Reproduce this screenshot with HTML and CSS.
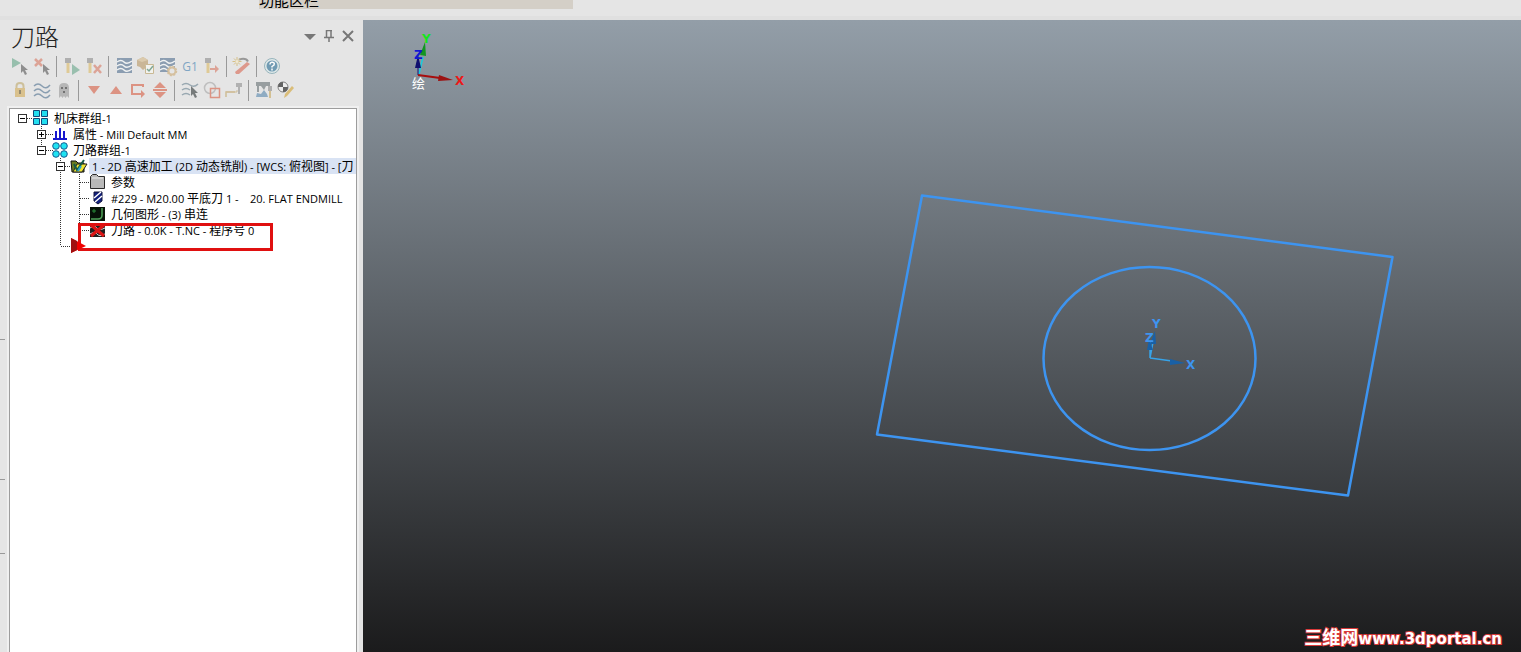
FILE: index.html
```html
<!DOCTYPE html>
<html lang="zh-CN">
<head>
<meta charset="utf-8">
<title>刀路</title>
<link rel="stylesheet" href="styles.css">
</head>
<body>
<header class="top-strip"><div class="tab-strip">功能区栏</div></header>
<div class="workspace">
  <div class="rail"><i class="tick tick-a"></i><i class="tick tick-b"></i><i class="tick tick-c"></i></div>
  <aside class="panel">
    <div class="panel-head">
      <h1>刀路</h1>
      <div class="panel-tools">
        <button aria-label="菜单"><svg width="12" height="12"><path d="M0 4h12L6 10z" fill="#777"/></svg></button>
        <button aria-label="固定"><svg width="12" height="12"><path d="M3.500 0v7M8 0v7M3 .5h6M1 7.500h10M6 8v4" fill="none" stroke="#777" stroke-width="1.500"/></svg></button>
        <button aria-label="关闭"><svg width="12" height="12"><path d="M1 1l10 10M11 1L1 11" stroke="#777" stroke-width="2"/></svg></button>
      </div>
    </div>
    <div class="toolbar">
      <button aria-label="选择全部操作"><svg viewBox="0 0 22 24"><path d="M3 4v10l9-5z" fill="#8fbba8"/><path d="M12 10v9l2-2 2 4 2-1-2-4h3z" fill="#858585"/></svg></button>
      <button aria-label="选择全部失效操作"><svg viewBox="0 0 22 24"><path d="M4 5l7 7M11 5l-7 7" stroke="#dc9c8e" stroke-width="2.500"/><path d="M12 10v9l2-2 2 4 2-1-2-4h3z" fill="#858585"/></svg></button>
      <span class="sep"></span>
      <button aria-label="重新生成"><svg viewBox="0 0 22 24"><path d="M4 4h6v5H4z" fill="#aaa"/><path d="M5.500 9h3v10h-3z" fill="#dfc88e"/><path d="M11 10v11l8-5z" fill="#91bba9"/></svg></button>
      <button aria-label="重新生成失效"><svg viewBox="0 0 22 24"><path d="M4 4h6v5H4z" fill="#aaa"/><path d="M5.500 9h3v10h-3z" fill="#dfc88e"/><path d="M11 11l7 8M18 11l-7 8" stroke="#dc9c8e" stroke-width="2.500"/></svg></button>
      <span class="sep"></span>
      <button aria-label="模拟"><svg viewBox="0 0 22 24"><path d="M4 4h15v15H4z" fill="#8296ac"/><path d="M4 8q4-3 7 0t8-1M4 12q4-3 7 0t8-1M4 16q4-3 7 0t8-1" fill="none" stroke="#f3f5f5" stroke-width="1.500"/></svg></button>
      <button aria-label="验证"><svg viewBox="0 0 22 24"><path d="M2 6l6-3 5 3v6l-5 4-3-3-3-1z" fill="#c8b28f"/><path d="M2 6l5 2 6-2-5-3z" fill="#dac8a8"/><path d="M10.500 11.500v8h8v-9h-8z" fill="#f4f4ef" stroke="#c6b58d"/><path d="M12 15l2 2 4-5" fill="none" stroke="#75a18d" stroke-width="1.500"/></svg></button>
      <button aria-label="模拟选项"><svg viewBox="0 0 22 24"><path d="M3 4h15v14H3z" fill="#8296ac"/><path d="M3 8q4-3 7 0t8-1M3 12q4-3 7 0t8-1M3 16q4-3 7 0" fill="none" stroke="#f3f5f5" stroke-width="1.500"/><circle cx="15" cy="17" r="3.500" fill="#e5e5e5" stroke="#d4bd98" stroke-width="2"/><circle cx="15" cy="17" r="4.500" fill="none" stroke="#d4bd98" stroke-width="1.500" stroke-dasharray="2 1.500"/></svg></button>
      <button class="g1">G1</button>
      <button aria-label="高速进给"><svg viewBox="0 0 22 24"><path d="M4 4h6v5H4z" fill="#aaa"/><path d="M5.500 9h3v10h-3z" fill="#dfc88e"/><path d="M9 15h7" stroke="#dc9c8e" stroke-width="2"/><path d="M14 11l4 4-4 4z" fill="#dc9c8e"/></svg></button>
      <span class="sep"></span>
      <button aria-label="高速铣削"><svg viewBox="0 0 22 24"><path d="M4 18L16 8l3 2L8 20H5z" fill="#dd9082"/><path d="M8 5.500q7-2 9 2" fill="none" stroke="#909090" stroke-width="2"/><path d="M6 3v9M1.500 7.500h9M3 4.500l6 6M9 4.500l-6 6" stroke="#d5bd7e"/><circle cx="6" cy="7.500" r="1.500" fill="#f3ead0"/></svg></button>
      <span class="sep"></span>
      <button aria-label="帮助"><svg viewBox="0 0 22 24"><circle cx="11" cy="12" r="7.500" fill="#dfe9ea" stroke="#8fb0b8"/><circle cx="11" cy="12" r="5.500" fill="#6594ae"/><path d="M9 10.500q0-2.500 2.500-2.200 2.500.5 1.500 2.700l-2 1.500v1M11 14.500v2" fill="none" stroke="#fff" stroke-width="1.500"/></svg></button>
    </div>
    <div class="toolbar">
      <button aria-label="锁定"><svg viewBox="0 0 22 24"><path d="M7.500 11V8q0-3 3.500-3t3.500 3v3" fill="none" stroke="#cbbd93" stroke-width="2"/><path d="M6 10h10v9H6z" fill="#d8be84"/><path d="M11 12v4" stroke="#8d8265" stroke-width="2"/></svg></button>
      <button aria-label="刀路显示"><svg viewBox="0 0 22 24"><path d="M3 8q4-4 8 0t8-1M3 13q4-4 8 0t8-1M3 18q4-4 8 0t8-1" fill="none" stroke="#8097ac" stroke-width="1.500"/></svg></button>
      <button aria-label="隐藏"><svg viewBox="0 0 22 24"><path d="M6 20V10q0-5 5-5t5 5v10l-2-2-1.500 2-1.500-2-1.500 2L8 18z" fill="#b1b1b1"/><path d="M8 9h2v2H8zM12 9h2v2h-2zM10 13h2v2h-2z" fill="#666"/></svg></button>
      <span class="sep"></span>
      <button aria-label="下移"><svg viewBox="0 0 22 24"><path d="M5 8h12l-6 8z" fill="#dc8b79"/></svg></button>
      <button aria-label="上移"><svg viewBox="0 0 22 24"><path d="M5 16h12l-6-8z" fill="#dc8b79"/></svg></button>
      <button aria-label="移动插入箭头"><svg viewBox="0 0 22 24"><path d="M16 9V7H5v9h10" fill="none" stroke="#dc8b79" stroke-width="2"/><path d="M14 12l4 4-4 4z" fill="#dc8b79"/></svg></button>
      <button aria-label="滚动"><svg viewBox="0 0 22 24"><path d="M5 10h12l-6-6zM5 14h12l-6 6zM4 11h14v2H4z" fill="#dc8b79"/></svg></button>
      <span class="sep"></span>
      <button aria-label="选择显示"><svg viewBox="0 0 22 24"><path d="M3 7q4-3 8 0t8-1M3 12q4-3 8 0M3 17q4-3 8 0" fill="none" stroke="#91a2ac" stroke-width="1.500"/><path d="M12 8v10l2-2 2 4 2-1-2-4h3z" fill="#6c7070"/></svg></button>
      <button aria-label="几何选择"><svg viewBox="0 0 22 24"><circle cx="9" cy="10" r="5.500" fill="none" stroke="#bbb" stroke-width="1.500"/><path d="M9.500 10.500h9v9h-9z" fill="none" stroke="#dc8b79" stroke-width="1.500"/></svg></button>
      <button aria-label="边界"><svg viewBox="0 0 22 24"><path d="M3 19v-5h9" fill="none" stroke="#cdb98f" stroke-width="1.500"/><path d="M3 14h11v-2" fill="none" stroke="#cdb98f"/><path d="M13 5h6v4h-2v7h-2V9h-2z" fill="#acacac"/></svg></button>
      <span class="sep"></span>
      <button aria-label="机床模拟"><svg viewBox="0 0 22 24"><path d="M3 4h14v4h-4l-2 4-3-4H6v6H4V8H3z" fill="#909799"/><path d="M3 19l1-4 4 1 3-4 3 4 1 3z" fill="#86a6c0"/><path d="M15 8h4v5h-4z" fill="#aaa"/><path d="M16 13h2v7h-2z" fill="#d2bd8b"/></svg></button>
      <button aria-label="编辑"><svg viewBox="0 0 22 24"><circle cx="8" cy="9" r="5" fill="#eee" stroke="#777"/><path d="M8 4v5H3q0-5 5-5M8 9h5q0 5-5 5z" fill="#555"/><path d="M9 20l1-4 7-8 2 2-7 8z" fill="#d9b96d"/></svg></button>
    </div>
    <main class="tree">
      <svg class="guides" aria-hidden="true"><path d="M17 9.500h6M31.500 17v25M36 25.500h7M36 41.500h7M50.500 49v88M55 57.500h6M51 137.500h10M69.500 65v57M70 73.500h10M70 89.500h10M70 105.500h10M70 121.500h10"/></svg>
      <div class="row"><button class="expander" aria-label="折叠"><svg viewBox="0 0 9 9"><path d="M2 4.500h5"/></svg></button><span class="icon"><svg viewBox="0 0 18 16"><path d="M1.500.5h6v6h-6zM9.500.5h6v6h-6zM1.500 8.500h6v6h-6zM9.500 8.500h6v6h-6z" fill="#22dff0" stroke="#124779"/></svg></span><span class="label"><b>机床群组</b>-1</span></div>
      <div class="row level1"><button class="expander" aria-label="展开"><svg viewBox="0 0 9 9"><path d="M2 4.500h5M4.500 2v5"/></svg></button><span class="icon"><svg viewBox="0 0 18 16"><path d="M2 13h14M5 5v8M9 2v11M13 5v8" stroke="#1717ce" stroke-width="2"/></svg></span><span class="label"><b>属性</b> - Mill Default MM</span></div>
      <div class="row level1"><button class="expander" aria-label="折叠"><svg viewBox="0 0 9 9"><path d="M2 4.500h5"/></svg></button><span class="icon"><svg viewBox="0 0 18 16"><g fill="#20e3f2" stroke="#155c92"><circle cx="5" cy="4" r="3.300"/><circle cx="13" cy="4" r="3.300"/><circle cx="5" cy="12" r="3.300"/><circle cx="13" cy="12" r="3.300"/></g></svg></span><span class="label"><b>刀路群组</b>-1</span></div>
      <div class="row level2"><button class="expander" aria-label="折叠"><svg viewBox="0 0 9 9"><path d="M2 4.500h5"/></svg></button><span class="icon"><svg viewBox="0 0 18 16"><path d="M1 3h5l2 2h6v9H2z" fill="#6b7b21" stroke="#111"/><path d="M3 14l4-8h10l-5 8z" fill="#f0e532" stroke="#222"/><path d="M4 6l3 6 7-10" fill="none" stroke="#155b48" stroke-width="2"/><path d="M8 13l3-5" stroke="#29a5cc" stroke-width="2"/></svg></span><span class="label selected">1 - 2D <b>高速加工</b> (2D <b>动态铣削</b>) - [WCS: <b>俯视图</b>] - [<b>刀</b></span></div>
      <div class="row level3"><span class="icon"><svg viewBox="0 0 18 16"><path d="M1.500 14.500v-12l2-2h4l2 2h6v12z" fill="#b9b9b9" stroke="#292929"/><path d="M3 4h11" stroke="#eee"/></svg></span><span class="label"><b>参数</b></span></div>
      <div class="row level3"><span class="icon"><svg viewBox="0 0 18 16"><path d="M5 2h8v9l-4 3-4-3z" fill="#12207d" stroke="#10133b"/><path d="M5 8l7-6M6 12l7-6" stroke="#fff" stroke-width="1.500"/></svg></span><span class="label">#229 - M20.00 <b>平底刀</b> 1 -&nbsp;&nbsp;&nbsp; 20. FLAT ENDMILL</span></div>
      <div class="row level3"><span class="icon"><svg viewBox="0 0 18 16"><path d="M1 1h15v14H1z" fill="#071207"/><path d="M13 2v7q0 4-4 4H2" fill="none" stroke="#4fa258" stroke-width="1.500"/><path d="M5 3v4M3 5h4" stroke="#298a38"/></svg></span><span class="label"><b>几何图形</b> - (3) <b>串连</b></span></div>
      <div class="row level3"><span class="icon"><svg viewBox="0 0 18 16"><path d="M1 2h15v13H1z" fill="#202020"/><path d="M1 6q5-3 7 0t8 0M1 12q5-3 7 0t8 0" fill="none" stroke="#ddd"/><path d="M2 3l13 11M15 3L2 14" stroke="#dc1515" stroke-width="3"/></svg></span><span class="label"><b>刀路</b> - 0.0K - T.NC - <b>程序号</b> 0</span></div>
      <div class="row level2 insertion"><span class="icon"><svg viewBox="0 0 18 16"><path d="M1 0v15l15-7z" fill="#f00000"/><path d="M1 0v15l6-3V3z" fill="#a01010"/></svg></span></div>
      <div class="callout"></div>
    </main>
  </aside>
  <section class="viewport" aria-label="绘图区">
    <svg class="drawing" viewBox="0 0 1158 632" preserveAspectRatio="xMinYMin meet">
      <g fill="none" stroke="#3d94f0" stroke-width="2.500" stroke-linejoin="round"><path d="M559 175.500L1029.500 237 985 475.500 514 414.500z"/><ellipse cx="786.500" cy="338.500" rx="106" ry="91.500"/></g>
      <g class="axis"><path d="M56 54l4-17" stroke="#19cddc" stroke-width="1.500"/><path d="M57 35l5-13 1 14z" fill="#129522"/><path d="M55 55V40" stroke="#101080"/><path d="M52 48l3-13 3 13z" fill="#10106f"/><path d="M55 55l22 3" stroke="#a80d0d" stroke-width="2"/><path d="M76 55l14 5-15 1z" fill="#9c1212"/><text x="59" y="23" fill="#16e51d">Y</text><text x="51" y="39" fill="#1118d1">Z</text><text x="92" y="65" fill="#ec1818">X</text><text class="plane" x="49" y="68">绘</text></g>
      <g class="axis"><path d="M787 338l3-16M787 338V322M787 338l22 3" fill="none" stroke="#37a3e8" stroke-width="1.500"/><path d="M787 324l5-13 1 13zM784 330l2-11 4 11zM807 339l15 4-15 2z" fill="#1960a6"/><g fill="#3d94f0"><text x="789" y="308">Y</text><text x="782" y="322">Z</text><text x="823" y="349">X</text></g></g>
    </svg>
    <a class="watermark" href="#"><span>三维网</span>www.3dportal.cn</a>
  </section>
</div>
</body>
</html>
```

FILE: styles.css
```css
* { box-sizing: border-box; }
body { margin: 0; height: 100vh; display: flex; flex-direction: column; overflow: hidden; background: #e5e5e5; color: #000; font-family: "Open Sans", "Noto Sans CJK SC", sans-serif; }
button { padding: 0; border: 0; background: none; font: inherit; }
svg { display: block; }
.top-strip { flex: 0 0 20px; padding-left: 259px; border-bottom: 4px solid #e0e0e0; }
.tab-strip { width: 314px; height: 9px; overflow: hidden; background: #d4cfc7; font: 15px/18px "Noto Sans CJK SC", sans-serif; display: flex; align-items: flex-end; }
.workspace { flex: 1; min-height: 0; display: flex; }
.rail { width: 7px; position: relative; }
.tick { position: absolute; left: 0; width: 5px; height: 1px; background: #999; }
.tick-a { top: 319px; }
.tick-b { top: 459px; }
.tick-c { top: 533px; }
.panel { width: 356px; display: flex; flex-direction: column; border-right: 3px solid #e3e3e3; }
.panel-head { height: 34px; padding: 0 5px 2px 4px; display: flex; align-items: center; justify-content: space-between; }
h1 { margin: 0; font: 300 24px/30px "Noto Sans CJK SC", sans-serif; color: #222; }
.panel-tools { display: flex; gap: 7px; padding-right: 1px; }
.panel-tools svg { width: 12px; height: 12px; }
.toolbar { height: 24px; padding-left: 2px; display: flex; align-items: center; }
.toolbar button, .toolbar svg { width: 22px; height: 24px; }
.toolbar svg { opacity: .9; }
.toolbar .g1 { font-size: 12px; color: #7fa5c4; }
.sep { width: 1px; height: 21px; margin: 0 4px 0 3px; background: #999; }
.tree { position: relative; flex: 1; margin: 6px 3px 0 2px; padding: 1px 0 0 3px; border: 1px solid #9d9d9d; border-bottom: 0; outline: 2px solid #f0f0f0; background: #fff; font-size: 11px; line-height: 16px; overflow: hidden; }
.guides { position: absolute; left: 0; top: 0; width: 120px; height: 150px; fill: none; stroke: #333; stroke-dasharray: 1 1; }
.row { position: relative; height: 16px; display: flex; align-items: center; white-space: pre; }
.level1 { padding-left: 19px; }
.level2 { padding-left: 38px; }
.level3 { padding-left: 76px; }
.expander { flex: none; width: 9px; height: 9px; margin: 0 5px; background: #fff; outline: 1px solid #333; outline-offset: -1px; }
.expander svg { width: 9px; height: 9px; stroke: #000; }
.icon { flex: none; width: 19px; padding-right: 1px; }
.icon svg { width: 18px; height: 16px; }
.label { flex: 1; height: 16px; padding-left: 3px; overflow: hidden; }
.label b { font: 12px/16px "Noto Sans CJK SC", sans-serif; }
.selected { background: #d9e3f4; }
.insertion { padding-left: 57px; z-index: 2; }
.callout { position: absolute; left: 68px; top: 114px; width: 195px; height: 28px; border: 3px solid #e01010; }
.viewport { position: relative; flex: 1; min-width: 0; background: linear-gradient(#939ea8, #1b1b1c); overflow: hidden; }
.drawing { width: 100%; height: 100%; }
.axis text { font: bold 12px "DejaVu Sans", sans-serif; }
.axis .plane { font: 13px "Noto Sans CJK SC", sans-serif; fill: #fff; }
.watermark { position: absolute; right: 19px; bottom: 3px; font: bold 15px/20px "DejaVu Sans", sans-serif; color: #fff; text-decoration: none; -webkit-text-stroke: 2px #d93a3a; paint-order: stroke fill; white-space: nowrap; }
.watermark span { font: bold 18px/20px "Noto Sans CJK SC", sans-serif; }
```
